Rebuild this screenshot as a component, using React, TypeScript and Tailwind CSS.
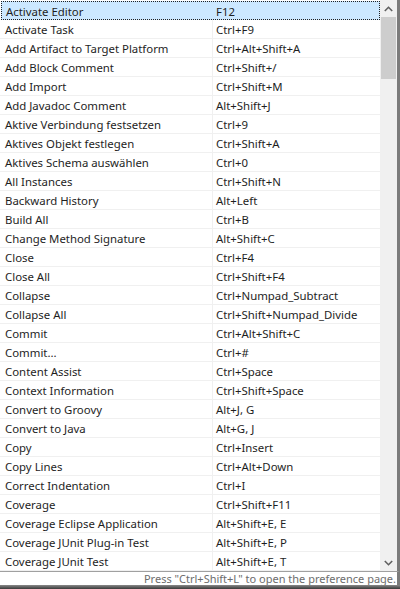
import React from "react";

const rows: [string, string][] = [
  ["Activate Editor", "F12"],
  ["Activate Task", "Ctrl+F9"],
  ["Add Artifact to Target Platform", "Ctrl+Alt+Shift+A"],
  ["Add Block Comment", "Ctrl+Shift+/"],
  ["Add Import", "Ctrl+Shift+M"],
  ["Add Javadoc Comment", "Alt+Shift+J"],
  ["Aktive Verbindung festsetzen", "Ctrl+9"],
  ["Aktives Objekt festlegen", "Ctrl+Shift+A"],
  ["Aktives Schema auswählen", "Ctrl+0"],
  ["All Instances", "Ctrl+Shift+N"],
  ["Backward History", "Alt+Left"],
  ["Build All", "Ctrl+B"],
  ["Change Method Signature", "Alt+Shift+C"],
  ["Close", "Ctrl+F4"],
  ["Close All", "Ctrl+Shift+F4"],
  ["Collapse", "Ctrl+Numpad_Subtract"],
  ["Collapse All", "Ctrl+Shift+Numpad_Divide"],
  ["Commit", "Ctrl+Alt+Shift+C"],
  ["Commit...", "Ctrl+#"],
  ["Content Assist", "Ctrl+Space"],
  ["Context Information", "Ctrl+Shift+Space"],
  ["Convert to Groovy", "Alt+J, G"],
  ["Convert to Java", "Alt+G, J"],
  ["Copy", "Ctrl+Insert"],
  ["Copy Lines", "Ctrl+Alt+Down"],
  ["Correct Indentation", "Ctrl+I"],
  ["Coverage", "Ctrl+Shift+F11"],
  ["Coverage Eclipse Application", "Alt+Shift+E, E"],
  ["Coverage JUnit Plug-in Test", "Alt+Shift+E, P"],
  ["Coverage JUnit Test", "Alt+Shift+E, T"],
];

export default function App() {
  return (
    <div
      className="w-[400px] h-[589px] bg-white flex flex-col overflow-hidden text-[11.4px] text-[#1e1e1e]"
      style={{ fontFamily: '"Noto Sans", "Open Sans", sans-serif' }}
    >
      <div className="flex h-[571px] shrink-0 border-r-[3px] border-[#7b7b7b]">
        <div className="flex-1 flex flex-col pt-px">
          {rows.map(([a, b], i) => (
            <div
              key={i}
              className={
                i === 0
                  ? "h-[19px] shrink-0 flex bg-[#cce8ff] border border-dotted border-[#222] ml-px"
                  : "h-[19px] shrink-0 flex border-b border-[#f0f0f0]"
              }
            >
              <div
                className={
                  i === 0
                    ? "w-[211px] pl-[4px] pt-[2px] flex items-center leading-none whitespace-nowrap"
                    : "w-[213px] pl-[5px] pt-[2px] flex items-center leading-none border-r border-[#f0f0f0] whitespace-nowrap"
                }
              >
                {a}
              </div>
              <div className="flex-1 pl-[3px] pt-[2px] flex items-center leading-none whitespace-nowrap">
                {b}
              </div>
            </div>
          ))}
        </div>
        <div className="w-[17px] bg-[#f0f0f0] flex flex-col items-center">
          <div className="h-[17px] w-full flex items-center justify-center">
            <svg width="9" height="6" viewBox="0 0 9 6">
              <path d="M0.8 5 L4.5 1.3 L8.2 5" fill="none" stroke="#606060" strokeWidth="1.6" />
            </svg>
          </div>
          <div className="w-[15px] h-[62px] bg-[#cdcdcd]" />
          <div className="flex-1" />
          <div className="h-[17px] w-full flex items-center justify-center">
            <svg width="9" height="6" viewBox="0 0 9 6">
              <path d="M0.8 1 L4.5 4.7 L8.2 1" fill="none" stroke="#606060" strokeWidth="1.6" />
            </svg>
          </div>
        </div>
      </div>
      <div className="h-[14px] shrink-0 border-t border-[#a0a0a0] border-r-[3px] border-r-[#7b7b7b] flex items-center justify-end pr-[1px] text-[11px] text-[#6d6d6d] leading-[12px] whitespace-nowrap">
        Press "Ctrl+Shift+L" to open the preference page.
      </div>
      <div className="flex-1 bg-gradient-to-b from-[#8a8a8a] to-[#3a3a3a]" />
    </div>
  );
}
